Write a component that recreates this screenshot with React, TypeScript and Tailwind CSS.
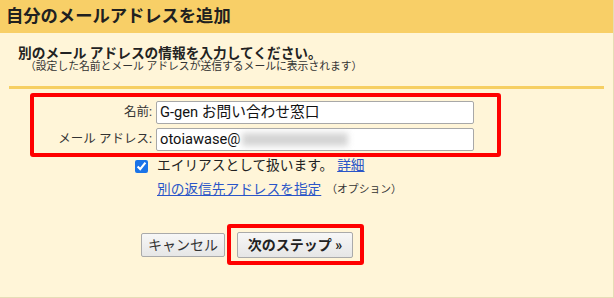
export default function App() {
  const font = { fontFamily: "Roboto, 'Noto Sans CJK JP', sans-serif" };
  return (
    <div
      className="w-[614px] h-[298px] bg-[#fff5d8] border-r border-b border-[#e6dcb6] text-[#222] flex flex-col overflow-hidden"
      style={font}
    >
      <div className="h-[33px] shrink-0 bg-[#f8cf67] pl-[6px] flex items-center text-[17.3px] font-bold leading-none text-[#202020]">
        自分のメールアドレスを追加
      </div>

      <div className="mt-[12px] pl-[18px] text-[13.7px] font-bold leading-[16px]">
        別のメール アドレスの情報を入力してください。
      </div>
      <div className="pl-[25px] text-[10.8px] leading-[12px] text-[#333]">
        （設定した名前とメール アドレスが送信するメールに表示されます）
      </div>

      <div className="mt-[13px] ml-[9px] mr-[9px] h-[3px] bg-[#f6cf63]" />

      {/* red highlight around the form */}
      <div className="mt-[4px] ml-[30px] w-[471px] h-[64px] border-4 border-[#ff0000] rounded-[3px] pt-[4px] flex flex-col gap-[4px]">
        <div className="flex items-center">
          <div className="w-[119px] text-right text-[12.5px] text-[#333] pr-[1px]">名前:</div>
          <div className="ml-[3px] w-[318px] h-[23px] bg-white border border-[#a8a8a8] rounded-[2px] flex items-center pl-[3px] text-[14.7px] text-[#111] leading-none">
            G-gen お問い合わせ窓口
          </div>
        </div>
        <div className="flex items-center">
          <div className="w-[119px] text-right text-[12.5px] text-[#333] pr-[1px]">メール アドレス:</div>
          <div className="ml-[3px] w-[318px] h-[23px] bg-white border border-[#a8a8a8] rounded-[2px] flex items-center pl-[3px] text-[14.7px] text-[#111] leading-none">
            otoiawase@
            <span className="ml-[1px] inline-block w-[106px] h-[13px] bg-[#d4d4d4] blur-[3px]" />
          </div>
        </div>
      </div>

      <div className="mt-[1px] pl-[135px] h-[16px] flex items-center text-[13.7px] leading-none">
        <input
          type="checkbox"
          defaultChecked
          className="m-0 w-[13px] h-[13px] accent-[#1a73e8]"
        />
        <span className="ml-[9px]">エイリアスとして扱います。</span>
        <a className="ml-[4px] text-[#2a55c8] underline">詳細</a>
      </div>

      <div className="mt-[8px] pl-[157px] h-[16px] flex items-center leading-none">
        <a className="text-[13.7px] text-[#2a55c8] underline">別の返信先アドレスを指定</a>
        <span className="ml-[5px] text-[10.8px] text-[#333]">（オプション）</span>
      </div>

      <div className="mt-[26px] pl-[141px] flex items-center gap-[2px]">
        <button className="w-[84px] h-[24px] border border-[#aaa] rounded-[2px] bg-gradient-to-b from-[#f7f7f7] to-[#e6e6e6] text-[14px] text-[#333] leading-none">
          キャンセル
        </button>
        <div className="w-[137px] h-[41px] border-4 border-[#ff0000] rounded-[3px] pl-[6px] pt-[4px]">
          <button className="w-[116px] h-[26px] border border-[#aaa] rounded-[2px] bg-gradient-to-b from-[#f7f7f7] to-[#e6e6e6] text-[14px] font-bold text-[#222] leading-none">
            次のステップ »
          </button>
        </div>
      </div>
    </div>
  );
}
